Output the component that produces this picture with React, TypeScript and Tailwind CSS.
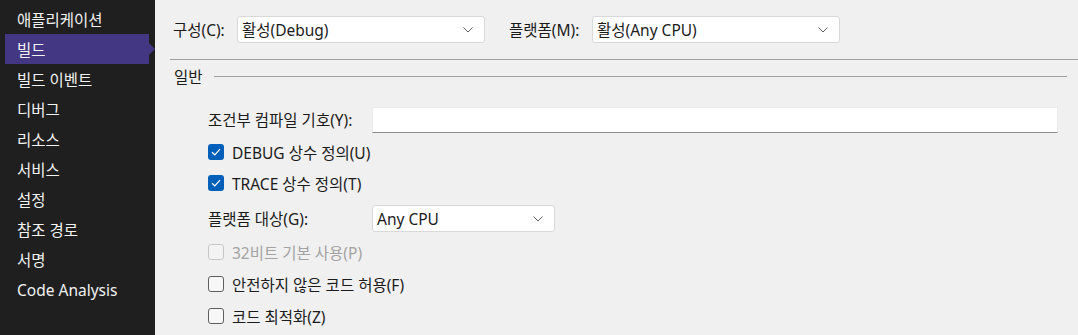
import React from 'react';

const font = { fontFamily: '"Noto Sans", "Noto Sans CJK KR", sans-serif' };

const navItems = [
  '애플리케이션',
  '빌드',
  '빌드 이벤트',
  '디버그',
  '리소스',
  '서비스',
  '설정',
  '참조 경로',
  '서명',
  'Code Analysis',
];

const Chevron: React.FC = () => (
  <svg width="12" height="8" viewBox="0 0 12 8" className="shrink-0">
    <polyline points="1.5,1.5 6,6 10.5,1.5" fill="none" stroke="#606060" strokeWidth="1" />
  </svg>
);

const Select: React.FC<{ value: string; width: string }> = ({ value, width }) => (
  <div
    className={`${width} h-[27px] bg-white border border-[#d9d9d9] rounded-[3px] flex items-center justify-between pl-[4px] pr-[10px] text-[15.5px] text-[#1b1b1b]`}
  >
    <span className="pt-[3px]">{value}</span>
    <Chevron />
  </div>
);

const Check: React.FC<{ label: string; checked?: boolean; disabled?: boolean }> = ({
  label,
  checked,
  disabled,
}) => (
  <div className="h-[32px] flex items-center pl-[38px]">
    {checked ? (
      <div className="w-[16px] h-[16px] rounded-[3px] bg-[#005fb8] flex items-center justify-center">
        <svg width="10" height="8" viewBox="0 0 10 8">
          <polyline points="1,4.2 3.8,6.8 9,1.2" fill="none" stroke="white" strokeWidth="1.2" />
        </svg>
      </div>
    ) : (
      <div
        className={`w-[16px] h-[16px] rounded-[3px] border ${
          disabled ? 'border-[#c6c6c6] bg-[#f3f3f3]' : 'border-[#5f5f5f] bg-[#f7f7f7]'
        }`}
      />
    )}
    <span className={`ml-[8px] pt-[3px] text-[15.5px] ${disabled ? 'text-[#a3a3a3]' : 'text-[#1b1b1b]'}`}>
      {label}
    </span>
  </div>
);

export default function App() {
  return (
    <div className="flex w-[1078px] h-[335px] overflow-hidden leading-none" style={font}>
      {/* Sidebar */}
      <div className="w-[155px] shrink-0 bg-[#1f1f1f] pt-[4px]">
        {navItems.map((item) => {
          const active = item === '빌드';
          return (
            <div
              key={item}
              className={`relative h-[30px] flex items-center text-[15.5px] text-[#f2f2f2] ml-[5px] w-[144px] pl-[12px] ${
                active ? 'bg-[#433682]' : ''
              }`}
            >
              <span className="pt-[3px]">{item}</span>
              {active && (
                <div className="absolute right-[-6px] top-[9px] w-0 h-0 border-y-[6px] border-y-transparent border-l-[6px] border-l-[#433682]" />
              )}
            </div>
          );
        })}
      </div>

      {/* Main */}
      <div className="flex-1 bg-[#f0f0f0] pl-[15px]">
        <div className="flex items-center pt-[16px] pl-[3px]">
          <span className="w-[64px] pt-[3px] text-[15.5px] text-[#1b1b1b]">구성(C):</span>
          <Select value="활성(Debug)" width="w-[248px]" />
          <span className="ml-[24px] w-[83px] pt-[3px] text-[15.5px] text-[#1b1b1b]">플랫폼(M):</span>
          <Select value="활성(Any CPU)" width="w-[248px]" />
        </div>

        <div className="mt-[16px] h-px bg-[#a0a0a0]" />

        <div className="h-[32px] flex items-center pl-[4px] pr-[11px]">
          <span className="pt-[3px] text-[15.5px] text-[#1b1b1b]">일반</span>
          <div className="flex-1 ml-[11px] h-px bg-[#a0a0a0]" />
        </div>

        <div className="mt-[11px]">
          <div className="h-[33px] flex items-center pl-[38px] pr-[20px]">
            <span className="w-[164px] pt-[3px] text-[15.5px] text-[#1b1b1b]">조건부 컴파일 기호(Y):</span>
            <div className="flex-1 h-[26px] bg-white border border-[#ebebeb] border-b-[#8a8a8a]" />
          </div>
          <Check label="DEBUG 상수 정의(U)" checked />
          <div className="-mt-[1px]">
            <Check label="TRACE 상수 정의(T)" checked />
          </div>
          <div className="h-[37px] flex items-center pl-[38px] pt-[2px]">
            <span className="w-[164px] pt-[3px] text-[15.5px] text-[#1b1b1b]">플랫폼 대상(G):</span>
            <Select value="Any CPU" width="w-[183px]" />
          </div>
          <Check label="32비트 기본 사용(P)" disabled />
          <Check label="안전하지 않은 코드 허용(F)" />
          <Check label="코드 최적화(Z)" />
        </div>
      </div>
    </div>
  );
}
